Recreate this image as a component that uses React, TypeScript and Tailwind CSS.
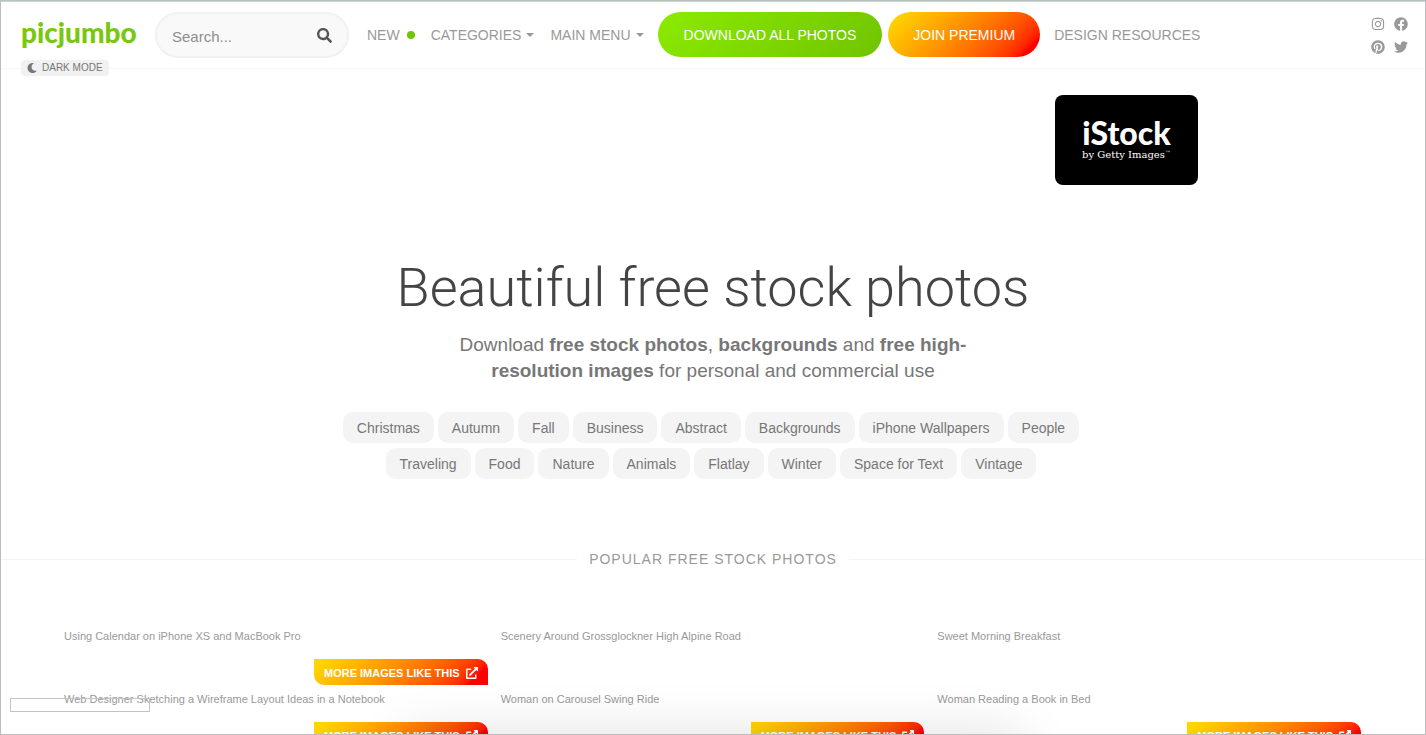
import { FaExternalLinkAlt, FaFacebook, FaInstagram, FaMoon, FaPinterest, FaSearch, FaTwitter } from 'react-icons/fa';

const tagRows = [
    ['Christmas', 'Autumn', 'Fall', 'Business', 'Abstract', 'Backgrounds', 'iPhone Wallpapers', 'People'],
    ['Traveling', 'Food', 'Nature', 'Animals', 'Flatlay', 'Winter', 'Space for Text', 'Vintage'],
];

const photos = [
    { title: 'Using Calendar on iPhone XS and MacBook Pro', more: true },
    { title: 'Scenery Around Grossglockner High Alpine Road', more: false },
    { title: 'Sweet Morning Breakfast', more: false },
    { title: 'Web Designer Sketching a Wireframe Layout Ideas in a Notebook', more: true },
    { title: 'Woman on Carousel Swing Ride', more: true },
    { title: 'Woman Reading a Book in Bed', more: true },
];

const socials = [
    { name: 'Instagram', Icon: FaInstagram },
    { name: 'Facebook', Icon: FaFacebook },
    { name: 'Pinterest', Icon: FaPinterest },
    { name: 'Twitter', Icon: FaTwitter },
];

function Caret() {
    return (
        <svg viewBox="0 0 8 4" className="w-2 h-1" fill="currentColor" aria-hidden="true">
            <path d="M0 0h8L4 4z" />
        </svg>
    );
}

function Header() {
    return (
        <header className="flex items-start justify-between h-[68px] pt-2.5 pl-5 pr-[17px] border-t border-t-[#c5ee7a] border-b border-b-[#f7f7f7]">
            <div className="flex items-start">
                <div className="flex flex-col items-start w-[134px]">
                    <a href="#" className="h-12 pt-0.5 font-['Lato'] font-black text-[28px] leading-9 text-[#77c80e]">
                        picjumbo
                    </a>
                    <button type="button" className="flex items-center gap-[5px] h-4 px-1.5 rounded bg-[#f1f1f1] text-[10px] leading-4 text-[#777]">
                        <FaMoon className="w-2.5 h-2.5" />
                        DARK MODE
                    </button>
                </div>
                <form className="flex items-center w-[194px] h-[46px] px-[15px] rounded-full border-2 border-[#f1f1f3] bg-[#f9f9f9]">
                    <input
                        type="search"
                        aria-label="Search"
                        placeholder="Search..."
                        className="flex-1 min-w-0 pt-1 bg-transparent text-[15px] placeholder:text-[#8e8e8e] outline-none"
                    />
                    <button type="submit" aria-label="Search" className="text-[#555]">
                        <FaSearch className="w-[15px] h-[15px]" />
                    </button>
                </form>
                <nav className="flex items-center h-[45px] ml-[18px] text-sm text-[#999] whitespace-nowrap">
                    <a href="#" className="flex items-center gap-[7px]">
                        NEW
                        <span className="w-2 h-2 rounded-full bg-[#6fc50a]" />
                    </a>
                    <button type="button" className="flex items-center gap-[5px] ml-4">
                        CATEGORIES
                        <Caret />
                    </button>
                    <button type="button" className="flex items-center gap-[5px] ml-4">
                        MAIN MENU
                        <Caret />
                    </button>
                    <a href="#" className="flex items-center h-full px-[26px] ml-3.5 rounded-full bg-linear-135 from-[#8ceb00] to-[#70c400] text-white">
                        DOWNLOAD ALL PHOTOS
                    </a>
                    <a href="#" className="flex items-center h-full px-[25px] ml-1.5 rounded-full bg-linear-135 from-[#ffd500] from-5% to-[#ff0000] to-90% text-white">
                        JOIN PREMIUM
                    </a>
                    <a href="#" className="ml-3.5">DESIGN RESOURCES</a>
                </nav>
            </div>
            <div className="grid grid-cols-2 gap-x-[9px] gap-y-[9px] pt-[5px] text-[#999]">
                {socials.map(({ name, Icon }) => (
                    <a key={name} href="#" aria-label={name}>
                        <Icon className="w-3.5 h-3.5" />
                    </a>
                ))}
            </div>
        </header>
    );
}

function Hero() {
    return (
        <section className="flex flex-col items-center pt-[71px] text-center">
            <h1 className="font-['Roboto'] font-light text-[54px] leading-[64px] text-[#444]">Beautiful free stock photos</h1>
            <p className="w-[540px] max-w-full mt-3 text-[19px] leading-[26px] text-[#777]">
                Download <strong>free stock photos</strong>, <strong>backgrounds</strong> and{' '}
                <strong>free high-resolution images</strong> for personal and commercial use
            </p>
            <div className="flex flex-col gap-[5px] mt-7 pr-1">
                {tagRows.map((row) => (
                    <div key={row[0]} className="flex flex-wrap justify-center gap-1">
                        {row.map((tag) => (
                            <a key={tag} href="#" className="px-3.5 pt-px rounded-[10px] bg-[#f4f4f4] text-sm leading-[30px] text-[#777]">
                                {tag}
                            </a>
                        ))}
                    </div>
                ))}
            </div>
        </section>
    );
}

export default function App() {
    return (
        <div className="relative h-screen overflow-hidden border border-[#bdbdbd] bg-white font-['Liberation_Sans',Arial,sans-serif]">
            <Header />
            <main>
                <div className="max-w-[970px] mx-auto flex justify-end pt-[26px]">
                    <a href="#" className="flex flex-col items-center w-[143px] h-[90px] pt-[22px] rounded-lg bg-black text-white">
                        <span className="font-['Lato'] font-black text-[32px] leading-8">iStock</span>
                        <span className="flex font-['DejaVu_Serif'] text-[10px] leading-3">
                            by Getty Images<span className="text-[6px] leading-2">™</span>
                        </span>
                    </a>
                </div>
                <Hero />
                <div className="flex items-center gap-3 mt-[70px]">
                    <span className="flex-1 h-px bg-[#f4f4f4]" />
                    <h2 className="text-sm leading-5 tracking-[1px] text-[#999]">POPULAR FREE STOCK PHOTOS</h2>
                    <span className="flex-1 h-px bg-[#f4f4f4]" />
                </div>
                <section className="grid grid-cols-3 gap-x-[13px] gap-y-1.5 pl-[63px] pr-16 mt-[59px]">
                    {photos.map((photo) => (
                        <article key={photo.title} className="flex flex-col gap-[15px]">
                            <a href="#" className="text-[11px] leading-4 text-[#999]">{photo.title}</a>
                            {photo.more && (
                                <a
                                    href="#"
                                    className="flex items-center self-end gap-1.5 h-[26px] pt-0.5 px-2.5 rounded-tr-[10px] rounded-bl-[10px] bg-linear-135 from-[#ffd500] from-5% to-[#ff0000] to-90% text-[11px] font-bold text-white"
                                >
                                    MORE IMAGES LIKE THIS
                                    <FaExternalLinkAlt className="w-3 h-3" />
                                </a>
                            )}
                        </article>
                    ))}
                </section>
            </main>
            {/* empty status box and the shadow of the closed bottom panel */}
            <div className="absolute left-[9px] bottom-[22px] w-[140px] h-3.5 border border-[#c4c4c4]" />
            <div className="absolute top-full inset-x-0 flex justify-center">
                <div className="w-[620px] h-40 shadow-[0_0_50px_rgba(0,0,0,0.12)]" />
            </div>
        </div>
    );
}
